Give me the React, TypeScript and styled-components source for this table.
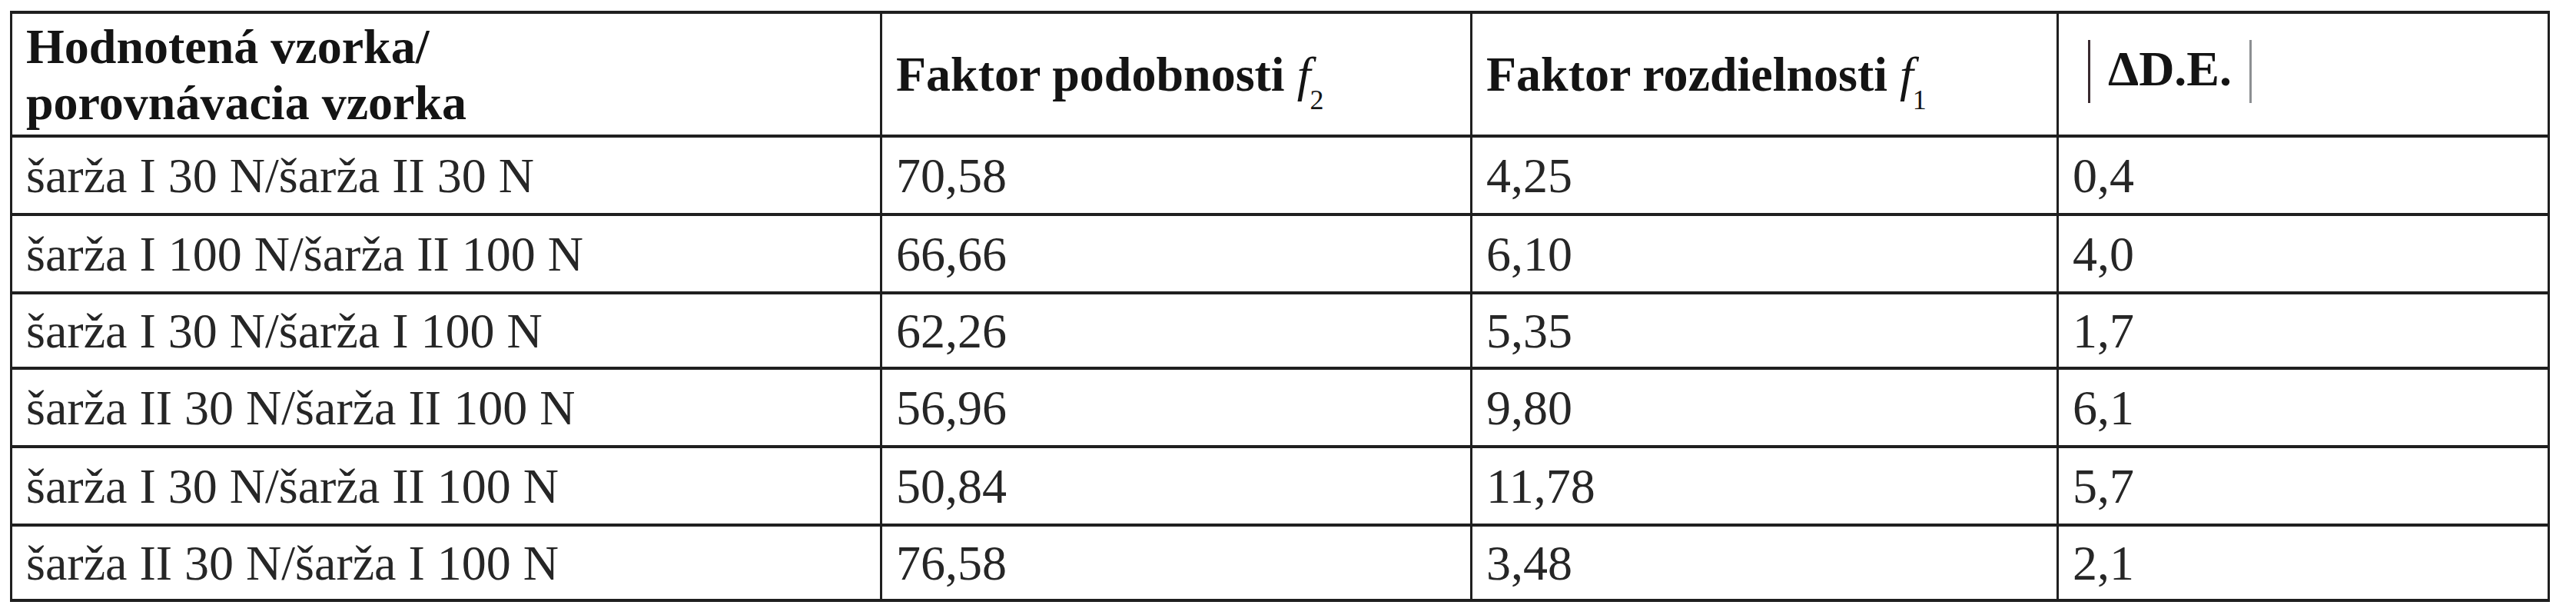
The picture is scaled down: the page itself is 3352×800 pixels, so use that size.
import React from 'react';
import styled, { createGlobalStyle } from 'styled-components';

const GlobalStyle = createGlobalStyle`
  html, body {
    margin: 0;
    padding: 0;
    background: #ffffff;
  }
`;

const Page = styled.div`
  padding: 14px 0 0 13px;
  font-family: 'Liberation Serif', 'Times New Roman', serif;
  color: #1d1d1d;
`;

const Table = styled.table`
  border-collapse: collapse;
  table-layout: fixed;
  width: 3305px;
  font-size: 64px;
  line-height: 73px;
`;

// collapsed borders add to the cell height, so the given pitch is trimmed
const Cell = styled.td<{ $height: number }>`
  height: ${(p) => p.$height - 3}px;
  padding: 0 0 0 18px;
  border-top: 4px solid #1f1f1f;
  border-bottom: 4px solid #1f1f1f;
  border-left: 3px solid #1f1f1f;
  border-right: 3px solid #1f1f1f;
  vertical-align: middle;
  white-space: nowrap;
  text-align: left;
  color: #262626;
`;

const HeadCell = styled(Cell).attrs({ as: 'th' })`
  font-weight: bold;
  color: #141414;
  white-space: normal;
`;

const Fn = styled.i`
  font-weight: normal;
`;

const Sub = styled.span`
  display: inline-block;
  font-size: 36px;
  line-height: 0;
  font-weight: normal;
  vertical-align: -24px;
  margin-left: -1px;
`;

const Abs = styled.span`
  display: inline-flex;
  align-items: center;
  gap: 23px;
  margin-left: 20px;
`;

const Bar = styled.span<{ $tone: string }>`
  display: inline-block;
  width: 3px;
  height: 82px;
  background: ${(p) => p.$tone};
  transform: translateY(4px);
`;

const rows: [string, string, string, string, number][] = [
  ['šarža I 30 N/šarža II 30 N', '70,58', '4,25', '0,4', 101],
  ['šarža I 100 N/šarža II 100 N', '66,66', '6,10', '4,0', 101],
  ['šarža I 30 N/šarža I 100 N', '62,26', '5,35', '1,7', 97],
  ['šarža II 30 N/šarža II 100 N', '56,96', '9,80', '6,1', 101],
  ['šarža I 30 N/šarža II 100 N', '50,84', '11,78', '5,7', 101],
  ['šarža II 30 N/šarža I 100 N', '76,58', '3,48', '2,1', 97],
];

export default function App() {
  return (
    <>
      <GlobalStyle />
      <Page>
        <Table>
          <colgroup>
            <col style={{ width: 1132 }} />
            <col style={{ width: 768 }} />
            <col style={{ width: 763 }} />
            <col style={{ width: 639 }} />
          </colgroup>
          <thead>
            <tr>
              <HeadCell $height={160}>
                Hodnotená vzorka/
                <br />
                porovnávacia vzorka
              </HeadCell>
              <HeadCell $height={160}>
                Faktor podobnosti <Fn>f</Fn>
                <Sub>2</Sub>
              </HeadCell>
              <HeadCell $height={160}>
                Faktor rozdielnosti <Fn>f</Fn>
                <Sub>1</Sub>
              </HeadCell>
              <HeadCell $height={160}>
                <Abs>
                  <Bar $tone="#3a2a30" />
                  ΔD.E.
                  <Bar $tone="#8c8f92" />
                </Abs>
              </HeadCell>
            </tr>
          </thead>
          <tbody>
            {rows.map(([pair, f2, f1, de, h]) => (
              <tr key={pair}>
                <Cell $height={h}>{pair}</Cell>
                <Cell $height={h}>{f2}</Cell>
                <Cell $height={h}>{f1}</Cell>
                <Cell $height={h}>{de}</Cell>
              </tr>
            ))}
          </tbody>
        </Table>
      </Page>
    </>
  );
}
